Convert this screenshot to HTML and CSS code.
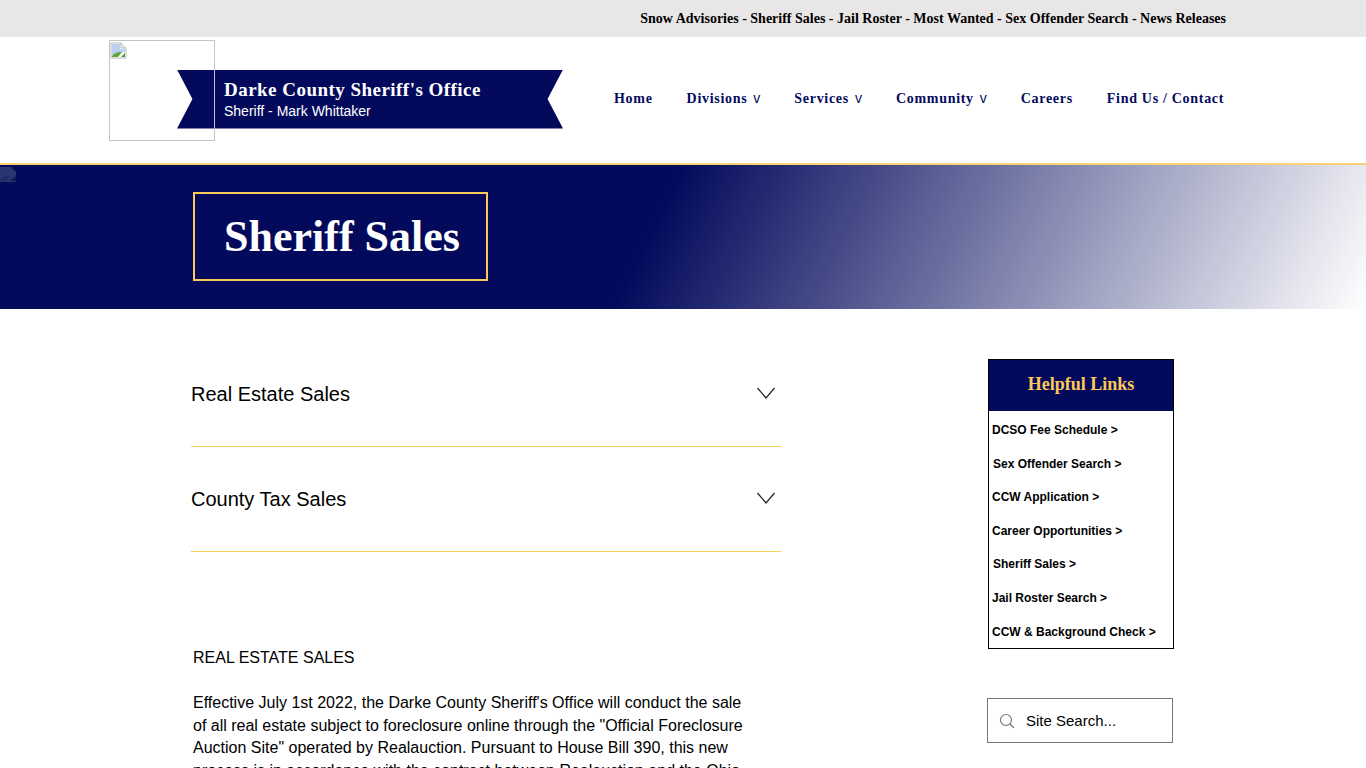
FILE: index.html

```html
<!DOCTYPE html>
<html>
<head>
<title>Sheriff Sales</title>
<meta name="viewport" content="width=device-width, initial-scale=1">
<link rel="stylesheet" href="styles.css">
</head>
<body>

<div class="topbar">
  <p>Snow Advisories - Sheriff Sales - Jail Roster - Most Wanted - Sex Offender Search - News Releases</p>
</div>

<div class="header">
  <div class="logo">
    <svg class="broken" width="17" height="17" viewBox="0 0 17 17">
      <path d="M1 1h10l5 5v10H1z" fill="#fff" stroke="#b8b8b8"/>
      <path d="M11 1v5h5" fill="#eeeeee" stroke="#b8b8b8"/>
      <path d="M2 2h8v5h5v3l-6 1-7 3z" fill="#bcd0f4"/>
      <path d="M2 15v-1c3-4 7-4 10-4l-4 5z" fill="#5ca83c"/>
      <path d="M11 15l4-4v4z" fill="#4f9a33"/>
    </svg>
  </div>
  <div class="ribbon">
    <h2>Darke County Sheriff's Office</h2>
    <p>Sheriff - Mark Whittaker</p>
  </div>
  <div class="nav">
    <a>Home</a>
    <a>Divisions <span class="caret">v</span></a>
    <a>Services <span class="caret">v</span></a>
    <a>Community <span class="caret">v</span></a>
    <a>Careers</a>
    <a>Find Us / Contact</a>
  </div>
</div>

<div class="hero">
  <svg class="broken dim" width="17" height="17" viewBox="0 0 17 17">
    <path d="M0 1h11l5 5v10H0z" fill="#28356f"/>
    <path d="M0 15v-1c3-4 7-4 10-4l-4 5z" fill="#1d2a66"/>
    <path d="M10 15l6-5v5z" fill="#0d1660"/>
  </svg>
  <h1 class="herotitle">Sheriff Sales</h1>
</div>

<div class="content">
  <div class="main">
    <div class="accordion">
      <div class="item">
        <span>Real Estate Sales</span>
        <svg width="18" height="12" viewBox="0 0 18 12"><path d="M.5 1l8.500 10 8.500-10" fill="none" stroke="#222" stroke-width="1.2"/></svg>
      </div>
      <div class="item">
        <span>County Tax Sales</span>
        <svg width="18" height="12" viewBox="0 0 18 12"><path d="M.5 1l8.500 10 8.500-10" fill="none" stroke="#222" stroke-width="1.2"/></svg>
      </div>
    </div>
    <div class="article">
      <p>REAL ESTATE SALES</p>
      <p>Effective July 1st 2022, the Darke County Sheriff's Office will conduct the sale of all real estate subject to foreclosure online through the "Official Foreclosure Auction Site" operated by Realauction. Pursuant to House Bill 390, this new process is in accordance with the contract between Realauction and the Ohio</p>
    </div>
  </div>

  <div class="side">
    <div class="links">
      <h3>Helpful Links</h3>
      <ul>
        <li>DCSO Fee Schedule &gt;</li>
        <li class="nudge">Sex Offender Search &gt;</li>
        <li>CCW Application &gt;</li>
        <li>Career Opportunities &gt;</li>
        <li class="nudge">Sheriff Sales &gt;</li>
        <li>Jail Roster Search &gt;</li>
        <li>CCW &amp; Background Check &gt;</li>
      </ul>
    </div>
    <div class="search">
      <svg width="16" height="16" viewBox="0 0 16 16"><circle cx="7" cy="7" r="5.5" fill="none" stroke="#777" stroke-width="1.2"/><path d="M11 11l4 4" stroke="#777" stroke-width="1.2"/></svg>
      <span>Site Search...</span>
    </div>
  </div>
</div>

</body>
</html>
```

FILE: styles.css

```css
html, body {height: 768px; overflow: hidden;}
body {margin: 0; background-color: #ffffff; color: #000000; font-family: "Liberation Sans", Arial, sans-serif;}
h1, h2, h3, p, ul {margin: 0; padding: 0;}

.topbar {
  height: 37px;
  background-color: #e8e6e6;
  display: flex;
  align-items: center;
  justify-content: flex-end;
  padding-right: 140px;
}
.topbar p {font-family: "Liberation Serif", serif; font-size: 14px; font-weight: bold;}

.header {
  position: relative;
  height: 124px;
  padding-bottom: 2px;
  display: flex;
  align-items: center;
  padding-left: 177px;
  border-bottom: 2px solid #f8d274;
}
.logo {
  position: absolute;
  left: 109px;
  top: 3px;
  width: 104px;
  height: 99px;
  border: 1px solid #c4c4c4;
  z-index: 2;
}
.broken {display: block;}
.logo .broken {margin-top: 1px;}
.ribbon {
  width: 386px;
  height: 59px;
  box-sizing: border-box;
  padding: 9px 0 0 47px;
  background-color: #030a5c;
  color: #ffffff;
  clip-path: polygon(0 0, 100% 0, 96% 50%, 100% 100%, 0 100%, 4% 50%);
}
.ribbon h2 {font-family: "Liberation Serif", serif; font-size: 19px; line-height: 22px; letter-spacing: 0.47px;}
.ribbon p {font-size: 14px; line-height: 18px; margin-top: 1px;}

.nav {
  display: flex;
  gap: 34px;
  margin-left: 51px;
  font-family: "Liberation Serif", serif;
  font-size: 14px;
  line-height: 16px;
  font-weight: bold;
  letter-spacing: 0.7px;
  color: #030a5c;
}
.caret {font-family: "Liberation Sans", sans-serif; font-weight: normal; font-size: 14px; line-height: 0; letter-spacing: 0; margin-left: 1.8px;}

.hero {
  height: 144px;
  position: relative;
  background: linear-gradient(116deg, #030a5c 47.500%, #ffffff 100%);
  display: flex;
  align-items: center;
  padding-left: 193px;
}
.hero .dim {position: absolute; left: 0; top: 1px;}
.herotitle {
  box-sizing: border-box;
  width: 295px;
  height: 89px;
  border: 2px solid #fbc859;
  padding-left: 29px;
  color: #ffffff;
  font-family: "Liberation Serif", serif;
  font-size: 44px;
  line-height: 85px;
  margin-top: -1px;
}

.content {display: flex; padding: 50px 0 0 191px;}
.main {width: 590px;}
.item {
  height: 87px;
  margin-bottom: 17px;
  border-bottom: 1px solid #f8cf60;
  display: flex;
  justify-content: space-between;
  padding: 0 6px 0 0;
  font-size: 20px;
}
.item span {line-height: 70px;}
.item svg {margin-top: 28px;}
.article {margin-top: 95px; padding-left: 2px; width: 555px; font-size: 16px; line-height: 22.4px;}
.article p {margin-bottom: 23px;}

.side {margin-left: 207px; width: 186px;}
.links {border: 1px solid #000000; box-sizing: border-box; width: 186px; height: 290px;}
.links h3 {
  background-color: #030a5c;
  color: #fbc859;
  font-family: "Liberation Serif", serif;
  font-size: 18px;
  text-align: center;
  height: 51px;
  line-height: 49px;
}
.links ul {list-style: none; padding: 3px 0 0 3px;}
.links li {font-size: 12px; font-weight: bold; line-height: 33.6px;}
.links li.nudge {padding-left: 1px;}
.search {
  margin: 49px 0 0 -1px;
  box-sizing: border-box;
  width: 186px;
  height: 45px;
  border: 1px solid #777777;
  display: flex;
  align-items: center;
  gap: 11px;
  padding-left: 11px;
  font-size: 15px;
}
```
